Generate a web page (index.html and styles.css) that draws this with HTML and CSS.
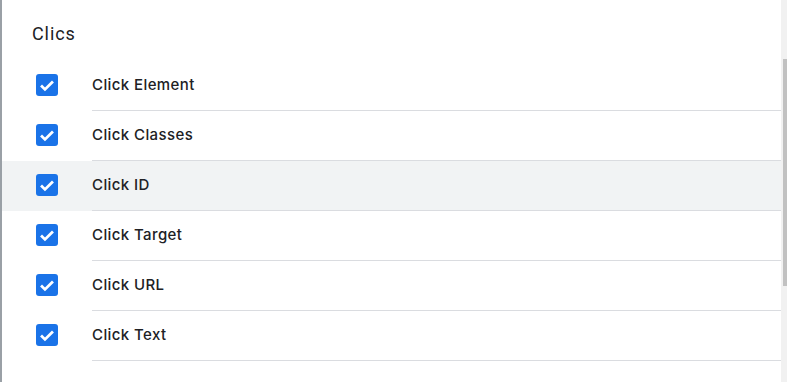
FILE: index.html
```html
<!DOCTYPE html>
<html lang="es">
<head>
    <meta charset="UTF-8">
    <meta name="viewport" content="width=device-width, initial-scale=1.0">
    <title>Variables integradas</title>
    <link rel="stylesheet" href="styles.css">
</head>
<body>
    <div class="panel">
        <div class="contenido">
            <h3 class="titulo">Clics</h3>
            <ul class="lista">
                <li class="fila">
                    <span class="caja"><svg viewBox="0 0 24 24"><path d="M5.5 12.5l4.3 4.3 8.7-8.7"/></svg></span>
                    <span class="nombre">Click Element</span>
                </li>
                <li class="fila">
                    <span class="caja"><svg viewBox="0 0 24 24"><path d="M5.5 12.5l4.3 4.3 8.7-8.7"/></svg></span>
                    <span class="nombre">Click Classes</span>
                </li>
                <li class="fila activa">
                    <span class="caja"><svg viewBox="0 0 24 24"><path d="M5.5 12.5l4.3 4.3 8.7-8.7"/></svg></span>
                    <span class="nombre">Click ID</span>
                </li>
                <li class="fila">
                    <span class="caja"><svg viewBox="0 0 24 24"><path d="M5.5 12.5l4.3 4.3 8.7-8.7"/></svg></span>
                    <span class="nombre">Click Target</span>
                </li>
                <li class="fila">
                    <span class="caja"><svg viewBox="0 0 24 24"><path d="M5.5 12.5l4.3 4.3 8.7-8.7"/></svg></span>
                    <span class="nombre">Click URL</span>
                </li>
                <li class="fila">
                    <span class="caja"><svg viewBox="0 0 24 24"><path d="M5.5 12.5l4.3 4.3 8.7-8.7"/></svg></span>
                    <span class="nombre">Click Text</span>
                </li>
            </ul>
        </div>
        <div class="barra">
            <div class="pulgar"></div>
        </div>
    </div>
</body>
</html>
```

FILE: styles.css
```css
body{
    margin: 0;
    padding: 0;
    font-family: Roboto, "Liberation Sans", Arial, sans-serif;
    color: #202124;
    background: #fff;
}
.panel{
    display: flex;
    height: 382px;
    border-left: 2px solid #9aa0a6;
    overflow: hidden;
}
.contenido{
    flex: 1;
}
.titulo{
    margin: 0;
    padding: 22px 0 15px 30px;
    font-size: 18px;
    font-weight: 400;
    letter-spacing: 0.9px;
    line-height: 24px;
}
.lista{
    list-style: none;
    margin: 0;
    padding: 0;
}
.fila{
    display: flex;
    align-items: stretch;
    height: 50px;
}
.fila.activa{
    background: #f1f3f4;
}
.caja{
    flex: 0 0 22px;
    height: 22px;
    margin: 13px 34px 0 34px;
    background: #1a73e8;
    border-radius: 3px;
}
.caja svg{
    display: block;
    width: 22px;
    height: 22px;
    fill: none;
    stroke: #fff;
    stroke-width: 3;
}
.nombre{
    flex: 1;
    display: flex;
    align-items: center;
    padding-bottom: 3px;
    font-family: Inter, Roboto, sans-serif;
    font-size: 15px;
    font-weight: 500;
    letter-spacing: 0.4px;
    border-bottom: 1px solid #dadce0;
}
.barra{
    width: 6px;
    background: #f1f1f1;
}
.pulgar{
    margin: 59px 0 0 2px;
    width: 4px;
    height: 227px;
    background: #c1c1c1;
}
```
